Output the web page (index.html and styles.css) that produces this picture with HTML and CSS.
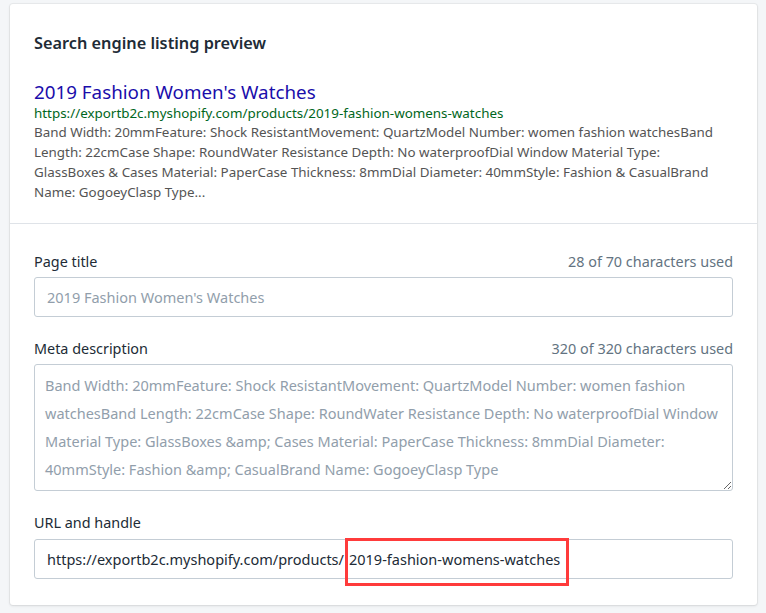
FILE: index.html
```html
<!DOCTYPE html>
<html>
<head>
<meta charset="utf-8">
<link rel="stylesheet" href="styles.css">
</head>
<body>
<div class="card">
  <div class="section preview">
    <h2 class="heading">Search engine listing preview</h2>
    <div class="serp">
      <div class="serp-title">2019 Fashion Women's Watches</div>
      <div class="serp-url">https://exportb2c.myshopify.com/products/2019-fashion-womens-watches</div>
      <div class="serp-desc">Band Width: 20mmFeature: Shock ResistantMovement: QuartzModel Number: women fashion watchesBand<br>Length: 22cmCase Shape: RoundWater Resistance Depth: No waterproofDial Window Material Type:<br>GlassBoxes &amp; Cases Material: PaperCase Thickness: 8mmDial Diameter: 40mmStyle: Fashion &amp; CasualBrand<br>Name: GogoeyClasp Type...</div>
    </div>
  </div>
  <div class="section fields">
    <div class="field">
      <div class="label-row"><span class="label">Page title</span><span class="count">28 of 70 characters used</span></div>
      <input class="input" type="text" placeholder="2019 Fashion Women's Watches">
    </div>
    <div class="field">
      <div class="label-row"><span class="label">Meta description</span><span class="count">320 of 320 characters used</span></div>
      <textarea class="textarea" placeholder="Band Width: 20mmFeature: Shock ResistantMovement: QuartzModel Number: women fashion&#10;watchesBand Length: 22cmCase Shape: RoundWater Resistance Depth: No waterproofDial Window&#10;Material Type: GlassBoxes &amp;amp; Cases Material: PaperCase Thickness: 8mmDial Diameter:&#10;40mmStyle: Fashion &amp;amp; CasualBrand Name: GogoeyClasp Type"></textarea>
    </div>
    <div class="field last">
      <div class="label-row"><span class="label">URL and handle</span></div>
      <div class="input url"><span class="prefix">https://exportb2c.myshopify.com/products/</span><span class="handle">2019-fashion-womens-watches</span></div>
    </div>
  </div>
</div>
</body>
</html>
```

FILE: styles.css
```css
* { box-sizing: border-box; }
html, body { margin: 0; }
body {
  background: #f4f6f8;
  padding: 4px 9px 8px 10px;
  font-family: "Noto Sans", "Open Sans", sans-serif;
  color: #212b36;
}
.card {
  width: 747px;
  background: #fff;
  border-radius: 3px;
  box-shadow: 0 0 0 1px rgba(63,63,68,0.06), 0 1px 3px 0 rgba(63,63,68,0.12);
}
.section.preview {
  padding: 27px 24px 0;
  height: 220px;
  border-bottom: 1px solid #dfe3e8;
}
.heading {
  margin: 0;
  font-size: 16.3px;
  line-height: 24px;
  font-weight: 600;
  color: #212b36;
}
.serp { margin-top: 25px; }
.serp-title {
  font-size: 18.8px;
  line-height: 24px;
  color: #1a0dab;
}
.serp-url {
  font-size: 13.4px;
  line-height: 18px;
  color: #006621;
}
.serp-desc {
  font-size: 13.4px;
  line-height: 20px;
  color: #545454;
  white-space: nowrap;
}
.section.fields {
  padding: 28px 24px 26px;
}
.field { margin-bottom: 22px; }
.field.last { margin-bottom: 0; }
.label-row {
  display: flex;
  justify-content: space-between;
  align-items: center;
  height: 20px;
  margin-bottom: 5px;
  font-size: 14.4px;
  line-height: 20px;
}
.field.last .label-row { margin-bottom: 6px; }
.label { color: #212b36; }
.count { color: #637381; }
.input {
  display: block;
  width: 100%;
  height: 40px;
  border: 1px solid #c4cdd5;
  border-radius: 3px;
  padding: 0 12px;
  font-family: inherit;
  font-size: 14.5px;
  color: #212b36;
  background: #fff;
  outline: none;
}
.input::placeholder { color: #919eab; opacity: 1; }
.textarea {
  display: block;
  width: 100%;
  height: 127px;
  border: 1px solid #c4cdd5;
  border-radius: 3px;
  padding: 6px 10px 8px;
  font-family: inherit;
  font-size: 14.5px;
  line-height: 28px;
  color: #212b36;
  background: #fff;
  resize: vertical;
  outline: none;
  overflow: hidden;
  white-space: pre;
}
.textarea::placeholder { color: #919eab; opacity: 1; }
.url {
  display: flex;
  align-items: center;
}
.prefix { color: #212b36; }
.handle {
  position: relative;
  margin-left: 5px;
  color: #212b36;
}
.handle::after {
  content: "";
  position: absolute;
  left: -4px;
  right: -9px;
  top: -11px;
  bottom: -17px;
  border: 3px solid #ff3b3b;
}
```
